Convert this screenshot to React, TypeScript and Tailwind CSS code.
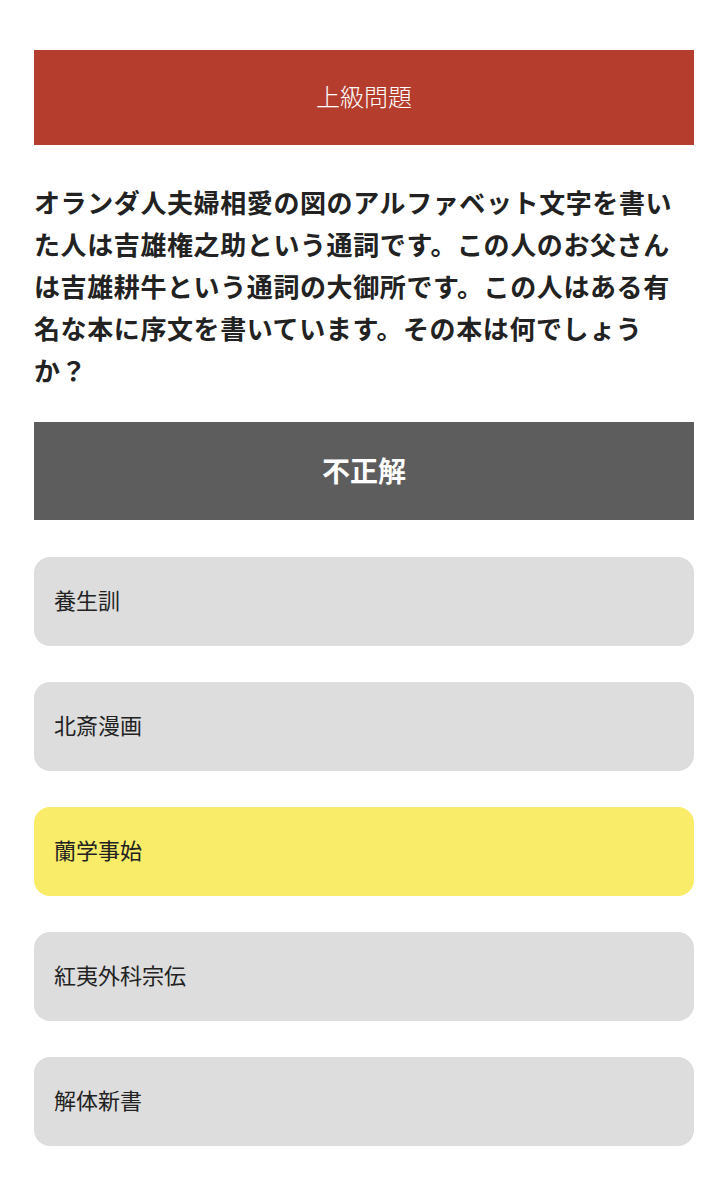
const choices = [
  { label: "養生訓", picked: false },
  { label: "北斎漫画", picked: false },
  { label: "蘭学事始", picked: true },
  { label: "紅夷外科宗伝", picked: false },
  { label: "解体新書", picked: false },
];

export default function App() {
  return (
    <div className="min-h-[1200px] bg-white font-['Noto_Sans_CJK_JP','Noto_Sans',sans-serif] text-[#222]">
      <div className="mx-[34px] pt-[50px] pb-10">
        {/* Level header */}
        <div className="flex h-[95px] items-center justify-center bg-[#b53d2e] pb-[3px] text-[24px] font-light text-white">
          上級問題
        </div>

        {/* Question */}
        <p className="mt-[36px] text-[26px] font-bold leading-[42px] tracking-[0.6px] [text-spacing-trim:space-all]">
          オランダ人夫婦相愛の図のアルファベット文字を書いた人は吉雄権之助という通詞です。この人のお父さんは吉雄耕牛という通詞の大御所です。この人はある有名な本に序文を書いています。その本は何でしょうか？
        </p>

        {/* Result */}
        <div className="mt-[31px] flex h-[98px] items-center justify-center bg-[#5d5d5d] pb-[3px] text-[28px] font-bold text-white">
          不正解
        </div>

        {/* Choices */}
        <ul className="mt-[37px] flex flex-col gap-[36px]">
          {choices.map((c) => (
            <li
              key={c.label}
              className={
                c.picked
                  ? "flex h-[89px] items-center rounded-2xl bg-[#f9ec68] px-5 pb-1 text-[22px]"
                  : "flex h-[89px] items-center rounded-2xl bg-[#dddddd] px-5 pb-1 text-[22px]"
              }
            >
              {c.label}
            </li>
          ))}
        </ul>
      </div>
    </div>
  );
}
